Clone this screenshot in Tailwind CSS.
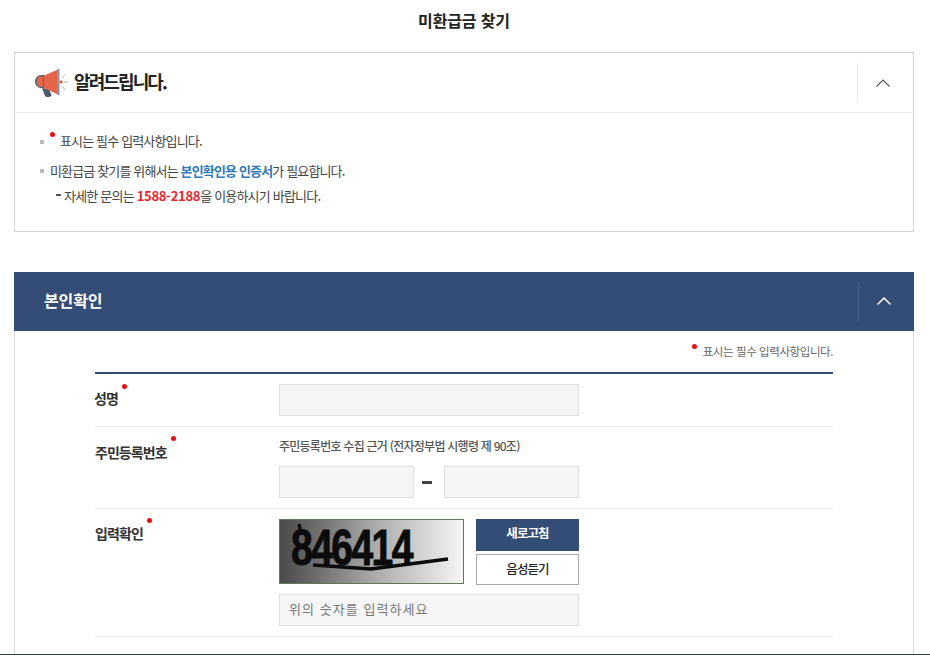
<!DOCTYPE html>
<html lang="ko">
<head>
  <meta charset="UTF-8" />
  <title>미환급금 찾기</title>
  <script src="https://cdn.jsdelivr.net/npm/@tailwindcss/browser@4"></script>
</head>
<body class="bg-white text-[#333] h-[655px] overflow-hidden font-['Noto_Sans_CJK_KR','Noto_Sans',sans-serif]">
  <div class="px-[14px] w-[930px] h-[655px] border-b border-[#2b3a3a] overflow-hidden">

    <!-- Title -->
    <h1 class="h-[52px] pb-[12px] pr-[2px] flex items-center justify-center text-[16px] font-bold text-[#222] tracking-[-0.15px]">미환급금 찾기</h1>

    <!-- Notice -->
    <section class="h-[180px] w-[900px] border border-[#d2d2d2]">
      <div class="h-[60px] border-b border-[#ebebeb] flex items-center justify-between">
        <div class="flex items-center pl-[20px]">
          <svg width="34" height="30" viewBox="0 0 34 30" class="mr-[5px]">
            <path d="M7 20l7 1 2.500 6c.6 1.800-5.500 3-6.500 1z" fill="#4d5a6b"/>
            <path d="M6 7h3v13H6c-3.500 0-6-3-6-6.500S2.500 7 6 7z" fill="#5b6573"/>
            <path d="M4 8.500h4v10H4c-1.500-1-2.200-3-2.200-5s.7-4 2.200-5z" fill="#e4654a"/>
            <path d="M9 7.500L22 2v24L9 20z" fill="#e4654a"/>
            <path d="M22 1.500l2.500-1v27l-2.500-1z" fill="#8b95a3"/>
            <circle cx="26" cy="14" r="1.700" fill="#e4654a"/>
            <path d="M27.500 9.500l2.500-3M29 14h4M27.500 18.500l2.500 3" stroke="#8b95a3" stroke-width="0.800" fill="none"/>
          </svg>
          <h2 class="text-[18px] font-bold text-[#222] tracking-[-1.9px] mb-[2px]">알려드립니다.</h2>
        </div>
        <div class="w-[56px] h-[40px] pr-[6px] border-l border-[#ebebeb] flex items-center justify-center">
          <svg width="16" height="10" viewBox="0 0 16 10"><path d="M1.500 8.500L8 2l6.500 6.500" stroke="#555" stroke-width="1.100" fill="none"/></svg>
        </div>
      </div>
      <div class="pt-[18px] pl-[25px] text-[13px] text-[#444] tracking-[-0.85px]">
        <p class="h-[20px] flex items-center"><span class="w-[4px] h-[4px] bg-[#bbb] mr-[6px] mt-[1px]"></span><span class="w-[5px] h-[5px] rounded-full bg-[#e60f14] mb-[14px] mr-[5px]"></span>표시는 필수 입력사항입니다.</p>
        <p class="h-[20px] mt-[10px] flex items-center"><span class="w-[4px] h-[4px] bg-[#bbb] mr-[6px]"></span><span>미환급금 찾기를 위해서는 <b class="text-[#2f78b5]">본인확인용 인증서</b>가 필요합니다.</span></p>
        <p class="h-[20px] mt-[5px] pl-[16px] flex items-center tracking-[-0.8px]"><span class="w-[5px] h-[2px] bg-[#555] mr-[3px] mb-[3px]"></span><span>자세한 문의는 <b class="text-[#e8262b] tracking-[-0.3px]">1588-2188</b>을 이용하시기 바랍니다.</span></p>
      </div>
    </section>

    <!-- Verification -->
    <section class="mt-[40px] w-[900px]">
      <div class="h-[59px] bg-[#344d76] flex items-center justify-between">
        <h2 class="pl-[30px] pb-[3px] text-[16px] font-bold text-white tracking-[-0.1px]">본인확인</h2>
        <div class="w-[56px] h-[40px] pr-[6px] pb-[2px] border-l border-[#47608a] flex items-center justify-center">
          <svg width="16" height="10" viewBox="0 0 16 10"><path d="M1.500 8.500L8 2l6.500 6.500" stroke="#fff" stroke-width="1.500" fill="none"/></svg>
        </div>
      </div>
      <div class="border-x border-[#d8d8d8] px-[80px] h-[400px] border-t-0">
        <p class="h-[41px] flex justify-end items-center text-[11.500px] text-[#666] tracking-[-0.42px]"><span class="w-[5px] h-[5px] rounded-full bg-[#e60f14] mb-[11px] mr-[6px]"></span>표시는 필수 입력사항입니다.</p>
        <div class="border-t-2 border-[#344d76]">

          <div class="h-[53px] border-b border-[#ebebeb] flex">
            <div class="w-[184px] pt-[14px] ml-[-1px] mr-[1px] text-[14px] font-bold text-[#333] tracking-[-0.85px] flex items-start h-fit">성명<span class="w-[5px] h-[5px] rounded-full bg-[#e60f14] ml-[4px] mt-[-4px]"></span></div>
            <div class="pt-[10px]"><input type="text" class="block w-[300px] h-[32px] bg-[#f5f5f5] border border-[#dedede]" /></div>
          </div>

          <div class="h-[82px] border-b border-[#ebebeb] flex">
            <div class="w-[184px] pt-[15px] text-[14px] font-bold text-[#333] tracking-[-0.95px] flex items-start h-fit">주민등록번호<span class="w-[5px] h-[5px] rounded-full bg-[#e60f14] ml-[4px] mt-[-6px]"></span></div>
            <div class="pt-[9px]">
              <p class="h-[20px] flex items-center text-[12px] text-[#555] font-medium tracking-[-0.75px]">주민등록번호 수집 근거 (전자정부법 시행령 제 90조)</p>
              <div class="mt-[10px] flex items-center">
                <input type="text" class="block w-[135px] h-[32px] bg-[#f5f5f5] border border-[#dedede]" />
                <span class="w-[30px] pr-[4px] flex justify-center"><span class="w-[10px] h-[3px] bg-[#444]"></span></span>
                <input type="text" class="block w-[135px] h-[32px] bg-[#f5f5f5] border border-[#dedede]" />
              </div>
            </div>
          </div>

          <div class="h-[128px] border-b border-[#ebebeb] flex">
            <div class="w-[184px] pt-[14px] text-[14px] font-bold text-[#333] tracking-[-0.85px] flex items-start h-fit">입력확인<span class="w-[5px] h-[5px] rounded-full bg-[#e60f14] ml-[4px] mt-[-5px]"></span></div>
            <div class="pt-[10px] w-[300px]">
              <div class="flex justify-between">
                <div class="relative w-[185px] h-[65px] border border-[#5d7a5d] bg-gradient-to-r from-[#4a4a4a] via-[#a8a8a8] via-50% to-[#f6f6f6] overflow-hidden">
                  <span class="absolute left-[11px] top-[3px] text-[50px] leading-[50px] font-bold text-[#0b0b0b] tracking-[-2px] [-webkit-text-stroke:1px_#0b0b0b] font-['Liberation_Sans',sans-serif] scale-x-[0.78] origin-left">846414</span>
                  <svg width="185" height="65" viewBox="0 0 185 65" class="absolute left-0 top-0">
                    <path d="M19 4l2 10M33 45l58 4 77-10" stroke="#0b0b0b" stroke-width="3.500" fill="none"/>
                  </svg>
                </div>
                <div class="w-[103px]">
                  <button class="block w-full h-[32px] pb-[3px] bg-[#344d76] text-white text-[12.500px] font-bold tracking-[-0.9px]">새로고침</button>
                  <button class="block w-full h-[31px] mt-[3px] bg-white border border-[#aaa] text-[#222] text-[12.500px] font-medium tracking-[-0.9px]">음성듣기</button>
                </div>
              </div>
              <input type="text" placeholder="위의 숫자를 입력하세요" class="block mt-[9px] w-[300px] h-[32px] pl-[9px] pb-[3px] bg-[#f5f5f5] border border-[#dedede] text-[13px] tracking-[1.05px] placeholder:text-[#777]" />
            </div>
          </div>

        </div>
      </div>
    </section>
  </div>
</body>
</html>
